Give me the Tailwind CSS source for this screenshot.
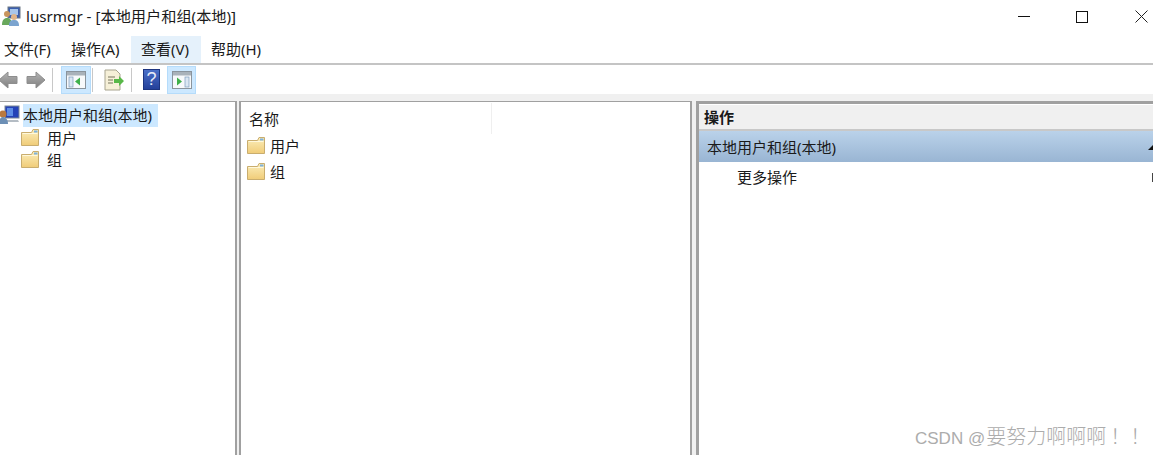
<!DOCTYPE html>
<html lang="zh-CN">
<head>
    <meta charset="UTF-8">
    <title>lusrmgr</title>
    <script src="https://cdn.jsdelivr.net/npm/@tailwindcss/browser@4"></script>
</head>
<body class="bg-[#f0f0f0] overflow-hidden font-['Noto_Sans','Noto_Sans_CJK_SC',sans-serif] text-[15px] text-[#1a1a1a]">
<svg width="0" height="0" class="absolute">
    <defs>
        <linearGradient id="folderFill" x1="0" y1="0" x2="0" y2="1"><stop offset="0" stop-color="#fbeebb"/><stop offset="1" stop-color="#f0cc78"/></linearGradient>
        <linearGradient id="arrowFill" x1="0" y1="0" x2="0" y2="1"><stop offset="0" stop-color="#b4b4b4"/><stop offset="1" stop-color="#7e7e7e"/></linearGradient>
        <symbol id="folder" viewBox="0 0 18 17">
            <path d="M.5 3.500h10L12 .5h5.500v16H.5z" fill="url(#folderFill)" stroke="#c9ad6e"/>
            <rect x="13" y="1.500" width="3.500" height="2" fill="#7fb2dc"/>
            <path d="M1.500 4.500h15" stroke="#fff8dc"/>
        </symbol>
        <symbol id="panelLeft" viewBox="0 0 22 20">
            <rect x="1.500" y="1.500" width="19" height="17" fill="#f7f9fb" stroke="#8a949d"/>
            <rect x="2" y="2" width="18" height="3.500" fill="#a9b2ba"/>
            <rect x="4" y="7" width="4" height="10" fill="#dbe7f3" stroke="#7f9dbd" stroke-width=".7"/>
            <path d="M15 7.500v8l-5-4z" fill="#3fb04a"/>
        </symbol>
        <symbol id="panelRight" viewBox="0 0 22 20">
            <rect x="1.500" y="1.500" width="19" height="17" fill="#f7f9fb" stroke="#8a949d"/>
            <rect x="2" y="2" width="18" height="3.500" fill="#a9b2ba"/>
            <rect x="14" y="7" width="4" height="10" fill="#dbe7f3" stroke="#7f9dbd" stroke-width=".7"/>
            <path d="M6 7.500v8l5-4z" fill="#3fb04a"/>
        </symbol>
    </defs>
</svg>

<div class="h-[455px] flex flex-col relative">
    <!-- title bar -->
    <div class="h-[36px] bg-white flex items-center shrink-0">
        <svg class="ml-[1px] w-[21px] h-[21px] mb-[3px]" viewBox="0 0 21 21">
            <rect x="7" y="1" width="12" height="11" fill="#3b5fb0" stroke="#6b7683"/>
            <rect x="9" y="3" width="8" height="6" fill="#a9c6ea"/>
            <circle cx="6" cy="8" r="3" fill="#c9955e"/>
            <path d="M1 19c0-5 2-7 5-7s5 2 5 7z" fill="#69a85c"/>
            <circle cx="13" cy="11" r="3" fill="#e0b488"/>
            <path d="M8 20c0-5 2-6 5-6s5 1 5 6z" fill="#7ba4cf"/>
        </svg>
        <span class="ml-[4px] mb-[3px] text-[15.2px] whitespace-nowrap">lusrmgr - [本地用户和组(本地)]</span>
        <div class="ml-auto flex items-center mb-[3px]">
            <svg class="w-[12px] h-[12px] mr-[46px]" viewBox="0 0 12 12"><path d="M0 5.500h12" stroke="#111" fill="none"/></svg>
            <svg class="w-[12px] h-[12px] mr-[47px]" viewBox="0 0 12 12"><rect x=".5" y=".5" width="11" height="11" stroke="#111" fill="none"/></svg>
            <svg class="w-[13px] h-[13px] mr-[5px]" viewBox="0 0 13 13"><path d="M.5.5l12 12M12.500.5l-12 12" stroke="#222" fill="none"/></svg>
        </div>
    </div>

    <!-- menu -->
    <div class="h-[29px] bg-white border-b-2 border-[#c4c4c4] flex shrink-0 items-stretch">
        <div class="w-[61px] pl-[4px] flex items-center">文件(F)</div>
        <div class="w-[70px] pl-[10px] flex items-center">操作(A)</div>
        <div class="w-[70px] pl-[10px] flex items-center bg-[#e5f1fb]">查看(V)</div>
        <div class="pl-[10px] flex items-center">帮助(H)</div>
    </div>

    <!-- toolbar -->
    <div class="h-[29px] bg-white flex items-center shrink-0">
        <svg class="w-[20px] h-[20px] -ml-[2px]" viewBox="0 0 20 20"><path d="M1 10l9-8v4.500h9v7h-9V18z" fill="url(#arrowFill)" stroke="#8e8e8e"/></svg>
        <svg class="w-[20px] h-[20px] ml-[8px]" viewBox="0 0 20 20"><path d="M19 10l-9-8v4.500H1v7h9V18z" fill="url(#arrowFill)" stroke="#8e8e8e"/></svg>
        <div class="w-px h-[24px] bg-[#c8c8c8] ml-[6px]"></div>
        <div class="w-[30px] h-[28px] ml-[8px] bg-[#cce8ff] border border-[#b5dcfb] flex items-center justify-center">
            <svg class="w-[22px] h-[20px]"><use href="#panelLeft"/></svg>
        </div>
        <div class="w-px h-[24px] bg-[#c8c8c8] ml-[1px]"></div>
        <svg class="w-[22px] h-[22px] ml-[10px]" viewBox="0 0 22 22">
            <path d="M2 1h11l4 4v16H2z" fill="#f6f0d8" stroke="#a8a48f"/>
            <path d="M5 8h7M5 11h5M5 14h5" stroke="#77745f"/>
            <path d="M11 10h5V7l5 5-5 5v-3h-5z" fill="#58b848"/>
        </svg>
        <div class="w-px h-[24px] bg-[#c8c8c8] ml-[6px]"></div>
        <div class="w-[17px] h-[21px] ml-[11px] bg-[linear-gradient(#4a6fc8,#24409a)] border border-[#1d3580] text-[#e8ecf8] text-[18px] leading-[19px] text-center font-['Liberation_Sans',sans-serif]">?</div>
        <div class="w-[29px] h-[28px] ml-[7px] bg-[#cce8ff] border border-[#b5dcfb] flex items-center justify-center">
            <svg class="w-[22px] h-[20px]"><use href="#panelRight"/></svg>
        </div>
    </div>

    <!-- panes -->
    <div class="flex-1 flex pt-[7px] min-h-0">
        <div class="w-[237px] bg-white border-t border-r-2 border-[#a0a0a0] shrink-0">
            <div class="h-[23px] mt-[2px] flex items-center">
                <svg class="w-[21px] h-[21px] -ml-[1px] shrink-0" viewBox="0 0 21 21">
                    <rect x="6" y="1" width="14" height="12" fill="#2443b8" stroke="#7a8794"/>
                    <rect x="8" y="3" width="6" height="8" fill="#5d8de6"/>
                    <path d="M8 15h11l1 2H8z" fill="#b4bcc4"/>
                    <circle cx="4" cy="9" r="3.500" fill="#b9793f"/>
                    <path d="M0 19c0-5 2-7 4-7s5 2 5 7z" fill="#6c8fb5"/>
                </svg>
                <span class="h-[23px] ml-[3px] pr-[6px] bg-[#cce8ff] flex items-center whitespace-nowrap">本地用户和组(本地)</span>
            </div>
            <div class="h-[23px] flex items-center pl-[21px]"><svg class="w-[18px] h-[17px] mb-[3px]"><use href="#folder"/></svg><span class="ml-[8px]">用户</span></div>
            <div class="h-[21px] flex items-center pl-[21px]"><svg class="w-[18px] h-[17px] mb-[3px]"><use href="#folder"/></svg><span class="ml-[8px]">组</span></div>
        </div>

        <div class="w-[453px] ml-[2px] bg-white border-l-2 border-t border-r-2 border-[#a0a0a0] shrink-0">
            <div class="h-[31px] flex items-start">
                <div class="w-[251px] h-[31px] mt-[1px] pt-[1px] pl-[8px] border-r border-[#efefef] flex items-center">名称</div>
            </div>
            <div class="h-[26px] flex items-center pl-[6px]"><svg class="w-[18px] h-[17px] mb-[2px]"><use href="#folder"/></svg><span class="ml-[5px]">用户</span></div>
            <div class="h-[26px] flex items-center pl-[6px]"><svg class="w-[18px] h-[17px] mb-[2px]"><use href="#folder"/></svg><span class="ml-[5px]">组</span></div>
        </div>

        <div class="flex-1 ml-[4px] bg-white border-l-3 border-t-3 border-[#a0a0a0] min-w-0">
            <div class="h-[27px] bg-[#f0f0f0] border-t border-white border-b-2 border-b-[#c8c8c8] pl-[5px] flex items-center font-semibold">操作</div>
            <div class="h-[31px] pl-[8px] pt-[2px] bg-[linear-gradient(#bad2ea,#99b5d3)] flex items-center relative">本地用户和组(本地)
                <svg class="absolute right-0 top-[14px] w-[5px] h-[5px]" viewBox="0 0 5 5"><path d="M5 0v5H0z" fill="#111"/></svg>
            </div>
            <div class="h-[30px] pl-[38px] flex items-center relative">更多操作
                <span class="absolute right-0 top-[11px] w-px h-[9px] bg-[#444]"></span>
            </div>
        </div>
    </div>

    <div class="absolute left-[915px] top-[421px] text-[#acacac] whitespace-nowrap font-['Liberation_Sans','Noto_Sans_CJK_SC',sans-serif] text-[17px] flex items-baseline">
        <span>CSDN @</span><span class="text-[20px] ml-[1px] font-['Noto_Sans_CJK_SC',sans-serif] font-light">要努力啊啊啊</span><span class="text-[20px] ml-[4px] font-['Noto_Sans_CJK_SC',sans-serif] font-light">！！</span>
    </div>
</div>
</body>
</html>
